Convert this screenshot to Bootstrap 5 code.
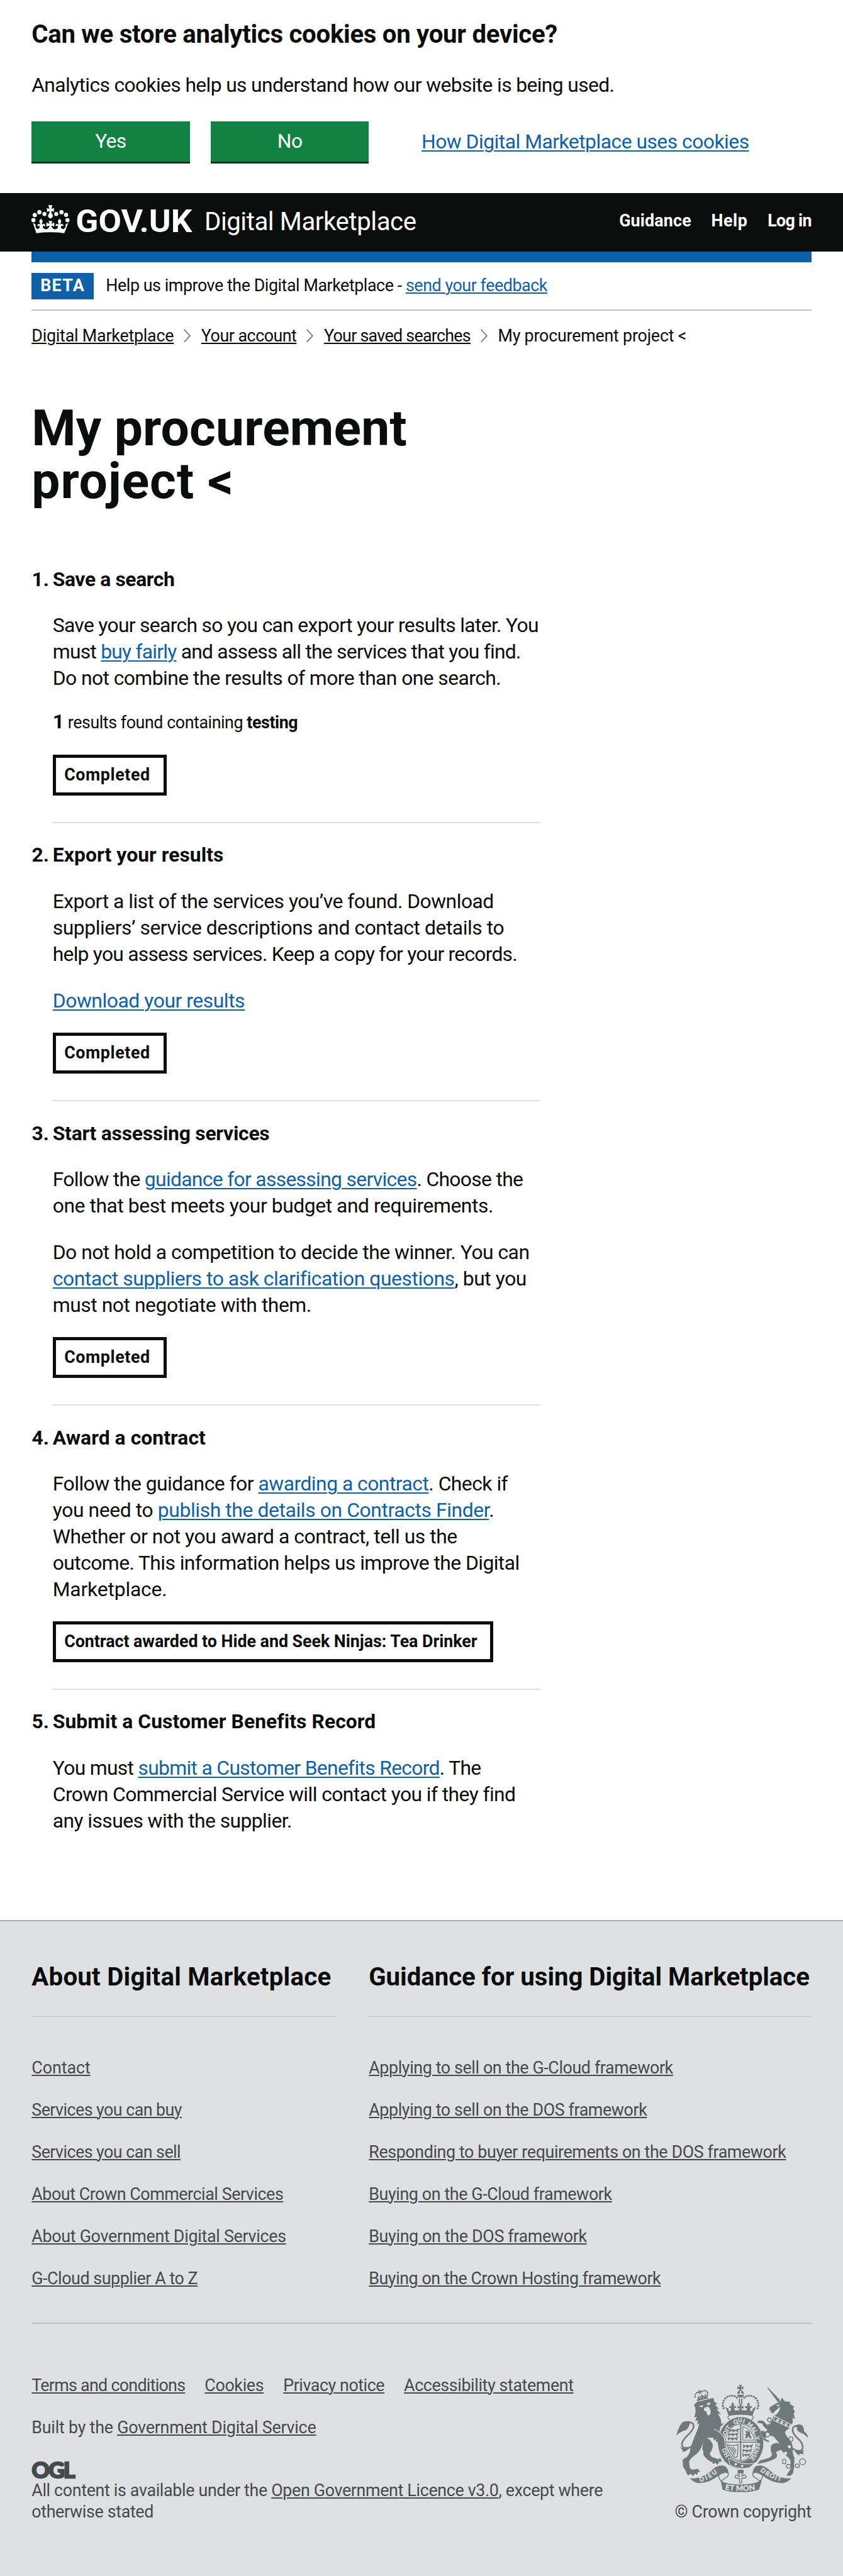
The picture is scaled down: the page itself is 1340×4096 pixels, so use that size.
<!DOCTYPE html>
<html lang="en">
<head>
<meta charset="utf-8">
<meta name="viewport" content="width=device-width, initial-scale=1">
<title>My procurement project - Digital Marketplace</title>
<link href="https://cdn.jsdelivr.net/npm/bootstrap@5.3.0/dist/css/bootstrap.min.css" rel="stylesheet">
<style>
:root{--u:.8375px;--ink:#0b0c0c;--blue:#0e61a6;--foot:#454a4d}
body{font-family:Roboto,"Liberation Sans",sans-serif;color:var(--ink);background:#fff;font-size:calc(38*var(--u));line-height:calc(50*var(--u));letter-spacing:-.021em;-webkit-font-smoothing:antialiased}
a{color:var(--blue);text-decoration:underline;text-decoration-thickness:1.7px;text-underline-offset:.08em}
h1,h2,h3,p,ul,ol{margin:0}
.wrap{padding:0 calc(60*var(--u))}
.txt-s{font-size:calc(32*var(--u));line-height:calc(40*var(--u));letter-spacing:-.0145em}
.head-m{font-size:calc(48*var(--u));line-height:calc(60*var(--u));font-weight:700;letter-spacing:-.0035em}
.nw{white-space:nowrap}
.rule{height:calc(2*var(--u));background:#bfc1c3}
.cookie-bar{padding-top:calc(36*var(--u));height:calc(366*var(--u))}
.cookie-bar p{margin:calc(41*var(--u)) 0 calc(43*var(--u))}
.btn-go{width:calc(300*var(--u));height:calc(80*var(--u));background:#118241;color:#fff;border:0;border-bottom:calc(4*var(--u)) solid #002d18;border-radius:0;font-size:inherit;line-height:1;padding:0;letter-spacing:inherit;margin-right:calc(40*var(--u))}
.cookie-bar .more{margin-left:calc(60*var(--u))}
.site-head{background:var(--ink);height:calc(112*var(--u));color:#fff}
.logo{width:calc(306*var(--u));height:calc(112*var(--u));flex:none;overflow:visible}
.product{font-size:calc(48*var(--u));letter-spacing:-.0106em;margin-left:calc(22*var(--u))}
.site-head nav a{color:#fff;text-decoration:none;font-weight:700}
.site-head nav{gap:calc(38*var(--u));margin-bottom:calc(5*var(--u));letter-spacing:0}
.bar{height:calc(20*var(--u));background:var(--blue)}
.phase{height:calc(90*var(--u))}
.phase .tagb{background:var(--blue);color:#fff;font-weight:700;letter-spacing:.05em;width:calc(118*var(--u));height:calc(50*var(--u));margin-right:calc(23*var(--u))}
.crumbs{margin-top:calc(28*var(--u))}
.crumbs a{color:var(--ink)}
.crumbs svg{width:calc(16*var(--u));height:calc(26*var(--u));margin:0 calc(18*var(--u))}
.title{font-size:calc(96*var(--u));line-height:calc(100*var(--u));font-weight:700;margin:calc(105.5*var(--u)) 0 calc(112*var(--u))}
.steps{width:calc(966*var(--u));counter-reset:s}
.step{padding-left:calc(40*var(--u));counter-increment:s}
.step h2{font-size:inherit;line-height:inherit;font-weight:700;letter-spacing:0;display:flex;margin-left:calc(-40*var(--u));margin-bottom:calc(38*var(--u))}
.step h2::before{content:counter(s) ".";width:calc(40*var(--u));padding-right:calc(7*var(--u));display:flex;justify-content:flex-end;flex:none}
.step p+p{margin-top:calc(38.5*var(--u))}
.step p+p.found{margin-top:calc(32*var(--u));font-size:calc(32*var(--u))}
.found b:first-child{font-size:calc(38*var(--u))}
.state{display:inline-block;vertical-align:top;border:calc(6*var(--u)) solid var(--ink);height:calc(78*var(--u));line-height:calc(66*var(--u));padding:0 calc(25*var(--u)) 0 calc(16*var(--u));font-size:calc(32*var(--u));font-weight:700;letter-spacing:.0225em;margin-top:calc(35*var(--u))}
.step .rule{background:#dee0e2;margin:calc(50*var(--u)) 0 calc(36.5*var(--u))}
.foot{margin-top:calc(163*var(--u));background:#dee0e2;border-top:2px solid #a4abaf;height:calc(1246*var(--u));color:var(--foot);padding-top:calc(76*var(--u))}
.foot a{color:var(--foot)}
.foot .head-m{color:var(--ink);margin-bottom:calc(43.5*var(--u))}
.fcol1{width:calc(580*var(--u));margin-right:calc(60*var(--u))}
.fcol2{width:calc(840*var(--u))}
.flist{margin-top:calc(77*var(--u));gap:calc(40*var(--u))}
.foot-rule{margin-top:calc(63*var(--u))}
.meta{margin-top:calc(98*var(--u))}
.meta-links{gap:calc(37*var(--u))}
.built{margin-top:calc(40*var(--u))}
.ogl{display:block;width:calc(84*var(--u));height:calc(36*var(--u));margin:calc(42*var(--u)) 0 calc(2*var(--u));overflow:visible}
.crest{width:calc(250*var(--u));height:calc(204*var(--u));margin:calc(18*var(--u)) calc(6*var(--u)) calc(19*var(--u)) 0}
/* tracking, in thousandths of an em */
.kp21{letter-spacing:.021em!important}.kp12{letter-spacing:.0116em!important}.kp6{letter-spacing:.0065em!important}.kp2{letter-spacing:.0023em!important}
.k1{letter-spacing:-.001em!important}.k5{letter-spacing:-.0053em!important}.k8{letter-spacing:-.0075em!important}.k10{letter-spacing:-.0100em!important}.k12{letter-spacing:-.0120em!important}.k14{letter-spacing:-.0138em!important}.k16{letter-spacing:-.0158em!important}.k18{letter-spacing:-.0178em!important}.k20{letter-spacing:-.0198em!important}.k21{letter-spacing:-.0212em!important}.k24{letter-spacing:-.0238em!important}.k26{letter-spacing:-.026em!important}
</style>
</head>
<body>
<section class="cookie-bar wrap">
  <h2 class="head-m nw"><span class="k8">Can we store analytics cookies on your device?</span></h2>
  <p class="nw"><span class="k20">Analytics cookies help us understand how our website is being used.</span></p>
  <div class="d-flex align-items-center">
    <button class="btn btn-go">Yes</button><button class="btn btn-go">No</button>
    <a class="more nw k16" href="#">How Digital Marketplace uses cookies</a>
  </div>
</section>
<header class="site-head wrap d-flex align-items-center">
  <svg class="logo" viewBox="60 366 306 112" fill="#fff" aria-label="GOV.UK">
    <g transform="translate(50 375) scale(.33333)">
      <circle cx="41" cy="127" r="12"/><circle cx="49" cy="98" r="12"/><circle cx="75" cy="82" r="12"/><circle cx="104" cy="92" r="11.500"/>
      <circle cx="171" cy="92" r="11.500"/><circle cx="201" cy="82" r="12"/><circle cx="227" cy="97" r="12"/><circle cx="235" cy="127" r="12"/>
      <path d="M126 42H149Q147 54 143 62Q150 62 158 58V80Q150 76 143 76Q143 84 146 90Q152 96 152 103Q150 114 138 118Q126 114 124 103Q124 96 130 90Q133 84 133 76Q126 76 118 80V58Q126 62 133 62Q129 54 126 42Z"/>
      <path d="M38 142L58 201Q138 191 217 201L240 142L224 152Q228 168 215 176Q204 180 198 170Q196 162 203 158Q210 158 210 164Q216 152 203 148Q197 150 196 154Q194 142 200 134Q198 126 190 119Q182 126 180 134Q186 142 184 154Q182 150 176 148Q164 152 169 164Q171 158 177 158Q184 162 180 170Q172 182 158 178Q148 174 143 158Q152 158 160 165V140Q152 146 143 148Q145 140 150 132H126Q131 140 133 148Q124 146 115 140V165Q124 158 133 158Q128 174 118 178Q104 182 96 170Q92 162 99 158Q105 158 107 164Q112 152 100 148Q94 150 92 154Q88 142 94 134Q92 126 84 119Q76 126 74 134Q80 142 79 154Q77 150 72 148Q60 152 65 164Q66 158 72 158Q79 162 76 170Q70 180 61 176Q50 168 54 152Z"/>
    </g>
    <text x="144" y="439.500" font-family="Roboto" font-weight="700" font-size="59" textLength="221" lengthAdjust="spacingAndGlyphs" letter-spacing="0">GOV.UK</text>
  </svg>
  <span class="product nw">Digital Marketplace</span>
  <nav class="d-flex ms-auto txt-s nw"><a href="#" class="kp6">Guidance</a><a href="#" class="kp21">Help</a><a href="#" class="k26">Log in</a></nav>
</header>
<main class="wrap">
  <div class="bar"></div>
  <div class="phase d-flex align-items-center txt-s nw"><span class="tagb d-flex align-items-center justify-content-center">BETA</span><span class="k16">Help us improve the Digital Marketplace - <a href="#">send your feedback</a></span></div>
  <div class="rule"></div>
  <div class="crumbs d-flex align-items-center txt-s nw">
    <a href="#" class="k8">Digital Marketplace</a>
    <svg viewBox="0 0 16 26" fill="none" stroke="#6f777b" stroke-width="2"><path d="M2 1L13 13L2 25"/></svg>
    <a href="#" class="k18">Your account</a>
    <svg viewBox="0 0 16 26" fill="none" stroke="#6f777b" stroke-width="2"><path d="M2 1L13 13L2 25"/></svg>
    <a href="#" class="k26">Your saved searches</a>
    <svg viewBox="0 0 16 26" fill="none" stroke="#6f777b" stroke-width="2"><path d="M2 1L13 13L2 25"/></svg>
    <span class="k8">My procurement project &lt;</span>
  </div>
  <h1 class="title nw"><span class="kp2">My procurement</span><br><span class="kp12">project &lt;</span></h1>
  <div class="steps nw">
    <section class="step">
      <h2><span class="k12">Save a search</span></h2>
      <p><span class="k21">Save your search so you can export your results later. You</span><br><span class="k24">must <a href="#">buy fairly</a> and assess all the services that you find.</span><br><span class="k18">Do not combine the results of more than one search.</span></p>
      <p class="found"><span class="k16"><b>1</b> results found containing <b>testing</b></span></p>
      <div class="state">Completed</div>
      <div class="rule"></div>
    </section>
    <section class="step">
      <h2><span class="kp2">Export your results</span></h2>
      <p><span class="k16">Export a list of the services you’ve found. Download</span><br><span class="k14">suppliers’ service descriptions and contact details to</span><br><span class="k24">help you assess services. Keep a copy for your records.</span></p>
      <p><a href="#" class="k14">Download your results</a></p>
      <div class="state">Completed</div>
      <div class="rule"></div>
    </section>
    <section class="step">
      <h2><span class="k8">Start assessing services</span></h2>
      <p><span class="k21">Follow the <a href="#">guidance for assessing services</a>. Choose the</span><br><span class="k14">one that best meets your budget and requirements.</span></p>
      <p><span class="k16">Do not hold a competition to decide the winner. You can</span><br><span class="k14"><a href="#">contact suppliers to ask clarification questions</a>, but you</span><br><span class="k14">must not negotiate with them.</span></p>
      <div class="state">Completed</div>
      <div class="rule"></div>
    </section>
    <section class="step">
      <h2><span class="kp2">Award a contract</span></h2>
      <p><span class="k16">Follow the guidance for <a href="#">awarding a contract</a>. Check if</span><br><span class="k12">you need to <a href="#">publish the details on Contracts Finder</a>.</span><br><span class="k14">Whether or not you award a contract, tell us the</span><br><span class="k18">outcome. This information helps us improve the Digital</span><br><span class="k5">Marketplace.</span></p>
      <div class="state k1">Contract awarded to Hide and Seek Ninjas: Tea Drinker</div>
      <div class="rule"></div>
    </section>
    <section class="step">
      <h2><span class="kp2">Submit a Customer Benefits Record</span></h2>
      <p><span class="k21">You must <a href="#">submit a Customer Benefits Record</a>. The</span><br><span class="k18">Crown Commercial Service will contact you if they find</span><br><span class="k18">any issues with the supplier.</span></p>
    </section>
  </div>
</main>
<footer class="foot wrap">
  <div class="d-flex nw">
    <div class="fcol1">
      <h2 class="head-m"><span class="kp6">About Digital Marketplace</span></h2>
      <div class="rule"></div>
      <ul class="flist list-unstyled txt-s d-flex flex-column align-items-start">
        <li><a href="#" class="k1">Contact</a></li><li><a href="#" class="k20">Services you can buy</a></li><li><a href="#" class="k20">Services you can sell</a></li><li><a href="#" class="k16">About Crown Commercial Services</a></li><li><a href="#" class="k10">About Government Digital Services</a></li><li><a href="#" class="k16">G-Cloud supplier A to Z</a></li>
      </ul>
    </div>
    <div class="fcol2">
      <h2 class="head-m"><span class="k1">Guidance for using Digital Marketplace</span></h2>
      <div class="rule"></div>
      <ul class="flist list-unstyled txt-s d-flex flex-column align-items-start">
        <li><a href="#" class="k14">Applying to sell on the G-Cloud framework</a></li><li><a href="#" class="k14">Applying to sell on the DOS framework</a></li><li><a href="#" class="k14">Responding to buyer requirements on the DOS framework</a></li><li><a href="#" class="k14">Buying on the G-Cloud framework</a></li><li><a href="#" class="k12">Buying on the DOS framework</a></li><li><a href="#" class="k16">Buying on the Crown Hosting framework</a></li>
      </ul>
    </div>
  </div>
  <div class="rule foot-rule"></div>
  <div class="meta d-flex justify-content-between txt-s nw">
    <div>
      <div class="meta-links d-flex"><a href="#" class="k26">Terms and conditions</a><a href="#" class="k12">Cookies</a><a href="#" class="k16">Privacy notice</a><a href="#" class="k14">Accessibility statement</a></div>
      <p class="built"><span class="k8">Built by the <a href="#">Government Digital Service</a></span></p>
      <svg class="ogl" viewBox="0 0 84 36"><text x=".6" y="33" font-family="Lato" font-weight="700" font-size="42" textLength="82" letter-spacing="0" fill="#454a4d" stroke="#454a4d" stroke-width="3.200">OGL</text></svg>
      <p><span class="k12">All content is available under the <a href="#">Open Government Licence v3.0</a>, except where</span><br><span class="k12">otherwise stated</span></p>
    </div>
    <div class="d-flex flex-column align-items-end">
      <svg class="crest" viewBox="72 84 750 612" fill="#6f787b">
        <defs>
          <path id="ring" d="M438 531A103 119 0 0 1 438 296A103 119 0 0 1 438 531"/>
          <path id="dieu" d="M208 637Q265 622 318 575"/>
          <path id="droit" d="M549 575Q600 618 682 638"/>
          <path id="mon" d="M350 682Q438 694 528 682"/>
          <g id="fleur"><path d="M0-25Q12-10 5 2Q22-10 20 8Q12 4 8 14L14 26H-14L-8 14Q-12 4-20 8Q-22-10-5 2Q-12-10 0-25Z"/></g>
          <path id="patt" d="M-9-18H9Q5-8 4-4Q10-5 17-9V9Q10 5 4 4Q5 8 9 18H-9Q-5 8-4 4Q-10 5-17 9V-9Q-10-5-4-4Q-5-8-9-18Z"/>
          <path id="beast" d="M0 4L8 0L14 6L26 3L40 6L54 2L62-2L64 4L56 8L58 18L50 20L48 12L36 14L32 20L24 20L26 13L14 13L10 20L2 18L6 10Z"/>
        </defs>
        <!-- lion -->
        <path d="M172 198L190 182L284 158L288 180L306 192L294 198L316 224L300 220L326 252L308 248L324 275L330 308L347 300L322 325L318 350L340 372L350 395L345 430L335 432L330 442L318 425L308 428L310 412L296 405L300 395L285 398L282 385L245 386Q275 400 280 430Q280 450 262 478Q270 498 300 503L310 508L322 500L332 520L318 523L305 540L295 528L280 535L278 525L262 518Q240 505 226 482L226 462L220 450L225 410Q215 455 185 480Q155 500 145 520L148 550Q150 565 165 568L195 562L208 578L195 582L190 598L178 588L168 603L155 592L138 600L128 580L120 565L110 548L108 512L118 502Q135 500 148 470Q155 430 165 410Q170 395 178 375Q195 340 204 302L192 312L195 285L180 292L188 265L174 270L182 240L180 212Z"/>
        <path d="M203 207Q214 197 227 203Q222 214 213 211ZM244 194Q256 180 268 188Q262 200 252 200ZM228 222L236 212L252 208L262 216L268 236Q268 256 256 258Q244 256 244 236L232 232Z" fill="#dee0e2"/>
        <path d="M188 168Q215 158 250 152L254 161Q220 166 192 178Z"/>
        <g><circle cx="179" cy="152" r="5"/><circle cx="180" cy="139" r="5"/><circle cx="188" cy="129" r="5"/><circle cx="199" cy="127" r="5"/><circle cx="219" cy="122" r="5"/><circle cx="231" cy="117" r="5"/><circle cx="243" cy="120" r="5"/><circle cx="250" cy="130" r="5"/><circle cx="249" cy="143" r="5"/>
        <use href="#patt" transform="translate(206 125) rotate(-12) scale(.6)"/><use href="#patt" transform="translate(219 152) rotate(-12) scale(.65)"/><use href="#fleur" transform="translate(200 157) rotate(-12) scale(.5)"/><use href="#fleur" transform="translate(238 148) rotate(-12) scale(.5)"/></g>
        <path d="M72 374Q84 325 106 298Q128 286 152 294Q144 335 122 345Q94 350 72 374Z"/>
        <path d="M140 297Q176 296 170 328Q162 348 136 372Q100 405 104 430Q116 455 160 436" stroke="#6f787b" stroke-width="9" fill="none"/>
        <path d="M90 438Q112 452 150 444L128 460L108 467Q112 456 90 438Z"/>
        <!-- unicorn -->
        <path d="M588 98L598 103L664 172L652 184Z"/>
        <path d="M650 186L668 174L673 156L682 168L690 178L722 182L718 192L745 210L736 216L748 240L740 245L748 278L734 272L736 300L722 312L628 262Q668 238 662 206Q652 222 638 230L618 254L622 242L605 240L612 230L601 228L604 212L640 190Z"/>
        <path d="M642 200Q652 194 660 198Q656 206 648 207Z" fill="#dee0e2"/>
        <path d="M625 262L722 312L712 335Q690 345 692 360Q700 380 722 402Q737 430 735 450Q732 470 745 500L742 560L735 590L722 602L700 602L708 585L725 560L722 520Q720 505 700 490L668 455Q645 462 640 470Q652 490 640 500Q610 520 565 528L535 535L548 515L600 500Q625 490 612 465Q605 445 615 425Q635 410 660 418Q640 395 625 378Q600 370 578 380L580 392L602 405L598 411L575 402L562 388L548 352L562 345L580 350L592 340Q565 322 562 304L532 300L540 288L565 288L590 312L605 306Q620 285 625 262Z"/>
        <path d="M632 262L720 308L712 326L626 286Z" stroke="#dee0e2" stroke-width="4"/>
        <g fill="#dee0e2"><use href="#fleur" transform="translate(650 284) rotate(27) scale(.5)"/><use href="#fleur" transform="translate(674 296) rotate(27) scale(.5)"/><use href="#fleur" transform="translate(698 308) rotate(27) scale(.5)"/><circle cx="716" cy="437" r="9"/><circle cx="694" cy="474" r="9"/></g>
        <g fill="#dee0e2" stroke="#6f787b" stroke-width="5"><ellipse cx="602" cy="284" rx="10" ry="12"/><ellipse cx="725" cy="393" rx="11" ry="13"/><ellipse cx="686" cy="521" rx="10" ry="13"/><ellipse cx="711" cy="548" rx="13" ry="11"/><ellipse cx="761" cy="545" rx="12" ry="10"/><circle cx="791" cy="522" r="17"/></g>
        <path d="M755 318Q728 322 736 352Q745 375 775 400Q800 430 788 452Q770 472 734 446" stroke="#6f787b" stroke-width="9" fill="none"/>
        <path d="M748 316Q775 302 792 318Q800 336 800 350Q822 366 822 386Q800 362 780 356Q758 350 758 326Z"/>
        <path d="M745 458Q770 470 802 454Q786 466 800 480L778 476Q768 482 778 487Q755 480 745 458Z"/>
        <!-- crown -->
        <use href="#patt" transform="translate(437 101)"/>
        <path d="M418 134Q422 118 434 117V134ZM442 117Q454 118 458 134H442ZM418 140H458Q456 156 438 157Q420 156 418 140ZM428 163H435V192H428ZM441 163H448V192H441Z"/>
        <g id="pearls"><circle cx="341" cy="217" r="6"/><circle cx="337" cy="203" r="6"/><circle cx="338" cy="188" r="6"/><circle cx="342" cy="174" r="6"/><circle cx="351" cy="161" r="6"/><circle cx="363" cy="152" r="6"/><circle cx="377" cy="147" r="6"/><circle cx="391" cy="146" r="6"/><circle cx="405" cy="149" r="6"/><circle cx="417" cy="157" r="6"/></g>
        <use href="#pearls" transform="matrix(-1 0 0 1 876 0)"/>
        <use href="#fleur" transform="translate(393 208)"/><use href="#fleur" transform="translate(483 208)"/><use href="#patt" transform="translate(438 212)"/>
        <path d="M350 208L370 222Q366 232 378 234Q438 222 498 234Q510 232 506 222L526 208L506 258Q438 246 370 258Z"/>
        <path d="M376 284Q358 270 372 258Q438 246 504 258Q518 270 500 284" fill="none" stroke="#6f787b" stroke-width="5"/>
        <!-- garter and shield -->
        <ellipse cx="439" cy="415" rx="129" ry="147"/>
        <ellipse cx="439" cy="412" rx="92" ry="108" fill="#dee0e2"/>
        <ellipse cx="439" cy="412" rx="87" ry="103" fill="none" stroke="#6f787b" stroke-width="4"/>
        <path d="M352 408H526V414H352ZM435 310H442V514H435Z"/>
        <g><use href="#beast" transform="translate(368 334)"/><use href="#beast" transform="translate(364 357)"/><use href="#beast" transform="translate(362 381)"/><use href="#beast" transform="translate(449 424) scale(.95 1)"/><use href="#beast" transform="translate(447 449) scale(.9 1)"/><use href="#beast" transform="translate(446 474) scale(.75 1)"/>
        <path d="M451 320V399H516Q514 350 451 320Z" fill="none" stroke="#6f787b" stroke-width="4"/><path d="M462 342L474 350L482 346L496 362L490 366L502 384L492 392L484 378L472 388L462 390L470 376L460 366L472 364Z"/>
        <path d="M362 424Q395 436 424 424L420 494L408 498Q374 480 362 424ZM372 434L404 486M384 436L410 476M396 437L413 464" fill="none" stroke="#6f787b" stroke-width="5"/></g>
        <path d="M372 512Q362 500 376 502Q440 545 520 530L490 556Q430 570 378 540Z" stroke="#dee0e2" stroke-width="4"/>
        <circle cx="411" cy="536" r="7" fill="#dee0e2"/><circle cx="447" cy="546" r="7" fill="#dee0e2"/>
        <g fill="#dee0e2" stroke="#dee0e2" stroke-width="1.200" font-family="Lato" font-weight="700" font-size="32" letter-spacing="0">
          <text><textPath href="#ring" startOffset="12.500%">HO</textPath></text>
          <text><textPath href="#ring" startOffset="28.500%">SOIT</textPath></text>
          <text><textPath href="#ring" startOffset="44%">QUI</textPath></text>
          <text><textPath href="#ring" startOffset="56%">MAL</textPath></text>
          <text><textPath href="#ring" startOffset="69.500%">Y</textPath></text>
          <text><textPath href="#ring" startOffset="75%">PENSE</textPath></text>
        </g>
        <path d="M286 336Q325 352 344 384Q352 410 346 430L335 432L330 443L318 427L308 428L310 412L296 405L300 392Z"/>
        <path d="M286 336Q325 352 344 384Q350 400 349 412" stroke="#dee0e2" stroke-width="4" fill="none"/>
        <path d="M580 352Q592 350 604 366Q600 384 590 384L562 388L548 352L562 345Z" stroke="#dee0e2" stroke-width="2"/>
        <ellipse cx="592" cy="367" rx="12" ry="13" fill="#dee0e2" stroke="#6f787b" stroke-width="5"/>
        <!-- scroll -->
        <g id="rib"><path d="M150 617Q225 620 285 560Q320 535 350 548Q368 560 370 590L345 584Q330 586 318 596Q270 640 200 645Q170 640 150 617Z"/><path d="M368 588Q372 604 356 612Q338 620 332 634M346 585Q308 590 314 612Q318 626 330 632" fill="none" stroke="#6f787b" stroke-width="5"/></g>
        <use href="#rib" transform="matrix(-1 0 0 1 876 0)"/>
        <path d="M322 628Q345 650 438 652Q531 650 560 622Q552 655 543 680Q510 695 438 695Q365 695 335 680Q332 650 322 628Z"/>
        <path d="M421 568H455V590H421Z"/><path d="M438 580Q452 594 444 608Q462 586 470 608Q470 616 460 616Q456 610 452 618H444V626Q446 642 438 644Q430 642 432 626V618H424Q420 610 416 616Q406 616 406 608Q414 586 432 608Q424 594 438 580Z" fill="#dee0e2" stroke="#6f787b" stroke-width="5"/>
        <g fill="#dee0e2" stroke="#dee0e2" stroke-width="1.500" font-family="Lato" font-weight="700" letter-spacing="0">
          <text font-size="36"><textPath href="#dieu" textLength="112">DIEU</textPath></text>
          <text font-size="36"><textPath href="#droit" textLength="132">DROIT</textPath></text>
          <text font-size="43"><textPath href="#mon" textLength="172">ET MON</textPath></text>
        </g>
      </svg>
      <span class="k10">© Crown copyright</span>
    </div>
  </div>
</footer>
<script src="https://cdn.jsdelivr.net/npm/bootstrap@5.3.0/dist/js/bootstrap.bundle.min.js"></script>
</body>
</html>
